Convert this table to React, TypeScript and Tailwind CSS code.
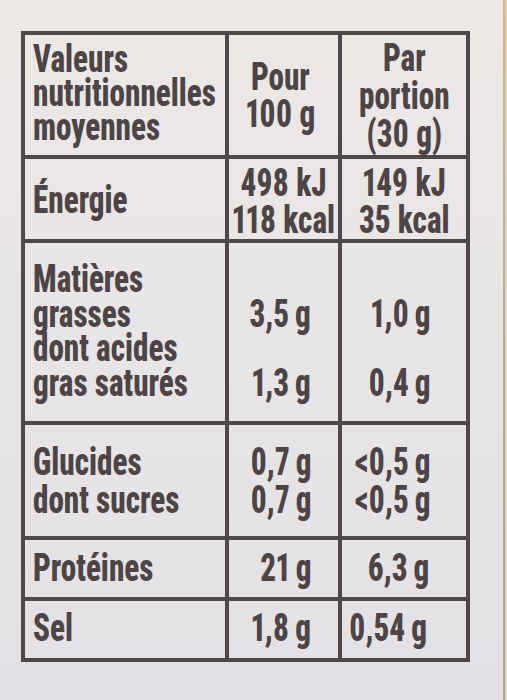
const font = "font-['Roboto_Condensed','Roboto',sans-serif] font-extrabold text-[38px] text-[#4c4445] whitespace-nowrap proportional-nums";

function Cell({ className = "", inner = "", children }: { className?: string; inner?: string; children?: React.ReactNode }) {
  return (
    <div className={`flex flex-col border-r-4 border-b-4 border-[#504848] ${className}`}>
      <div className={`w-max scale-x-[0.82] ${inner}`}>{children}</div>
    </div>
  );
}

const L = "origin-left text-left";
const C = "origin-center text-center";
const R = "origin-right text-right";
const g = (v: string) => `${v}\u2009g`;

export default function App() {
  return (
    <div className="w-[507px] h-[700px] flex bg-linear-to-b from-[#ece8e6] via-[#e8e5e6] to-[#e3e1e5] overflow-hidden">
      <div className="flex-1 pl-[21px] pt-[31px]">
        <div className={`grid grid-cols-[204px_113px_128px] w-[449px] border-l-4 border-t-4 border-[#504848] ${font}`}>
          {/* header */}
          <Cell className="items-start h-[124px] pl-[8px] pt-[7px] leading-[34px]" inner={L}>
            <div>Valeurs</div>
            <div>nutritionnelles</div>
            <div>moyennes</div>
          </Cell>
          <Cell className="items-center h-[124px] pt-[24px] leading-[37px] pr-[6px]" inner={C}>
            <div>Pour</div>
            <div>100 g</div>
          </Cell>
          <Cell className="items-center h-[124px] pt-[4px] leading-[38px]" inner={C}>
            <div>Par</div>
            <div>portion</div>
            <div>(30 g)</div>
          </Cell>

          {/* energy */}
          <Cell className="items-start h-[84px] pl-[8px] pt-[24px] leading-[35px]" inner={L}>
            <div>Énergie</div>
          </Cell>
          <Cell className="items-center h-[84px] pt-[6px] leading-[37px]" inner={C}>
            <div>498 kJ</div>
            <div>118 kcal</div>
          </Cell>
          <Cell className="items-center h-[84px] pt-[6px] leading-[37px]" inner={C}>
            <div>149 kJ</div>
            <div>35 kcal</div>
          </Cell>

          {/* fats */}
          <Cell className="items-start h-[182px] pl-[8px] pt-[19px] leading-[34.5px]" inner={L}>
            <div>Matières</div>
            <div>grasses</div>
            <div>dont acides</div>
            <div>gras saturés</div>
          </Cell>
          <Cell className="items-end h-[182px] pt-[19px] leading-[34.5px] pr-[27px]" inner={R}>
            <div>&nbsp;</div>
            <div>{g("3,5")}</div>
            <div>&nbsp;</div>
            <div>{g("1,3")}</div>
          </Cell>
          <Cell className="items-end h-[182px] pt-[19px] leading-[34.5px] pr-[35px]" inner={R}>
            <div>&nbsp;</div>
            <div>{g("1,0")}</div>
            <div>&nbsp;</div>
            <div>{g("0,4")}</div>
          </Cell>

          {/* carbs */}
          <Cell className="items-start h-[115px] pl-[8px] pt-[18px] leading-[38px]" inner={L}>
            <div>Glucides</div>
            <div>dont sucres</div>
          </Cell>
          <Cell className="items-end h-[115px] pt-[18px] leading-[38px] pr-[27px]" inner={R}>
            <div>{g("0,7")}</div>
            <div>{g("0,7")}</div>
          </Cell>
          <Cell className="items-end h-[115px] pt-[18px] leading-[38px] pr-[35px]" inner={R}>
            <div>{g("<0,5")}</div>
            <div>{g("<0,5")}</div>
          </Cell>

          {/* protein */}
          <Cell className="items-start h-[61px] pl-[8px] pt-[11px] leading-[35px]" inner={L}>
            <div>Protéines</div>
          </Cell>
          <Cell className="items-end h-[61px] pt-[11px] leading-[35px] pr-[27px]" inner={R}>
            <div>{g("21")}</div>
          </Cell>
          <Cell className="items-end h-[61px] pt-[11px] leading-[35px] pr-[37px]" inner={R}>
            <div>{g("6,3")}</div>
          </Cell>

          {/* salt */}
          <Cell className="items-start h-[61px] pl-[8px] pt-[10px] leading-[35px]" inner={L}>
            <div>Sel</div>
          </Cell>
          <Cell className="items-end h-[61px] pt-[10px] leading-[35px] pr-[27px]" inner={R}>
            <div>{g("1,8")}</div>
          </Cell>
          <Cell className="items-end h-[61px] pt-[10px] leading-[35px] pr-[39px]" inner={R}>
            <div>{g("0,54")}</div>
          </Cell>
        </div>
      </div>
      <div className="w-[2px] h-full bg-linear-to-b from-[#cdb88a] via-[#b9aa8c] to-[#b3a68e]" />
      <div className="w-[2px] h-full bg-linear-to-b from-[#e2cf9e] via-[#ddd6ca] to-[#d9d2ca]" />
    </div>
  );
}
